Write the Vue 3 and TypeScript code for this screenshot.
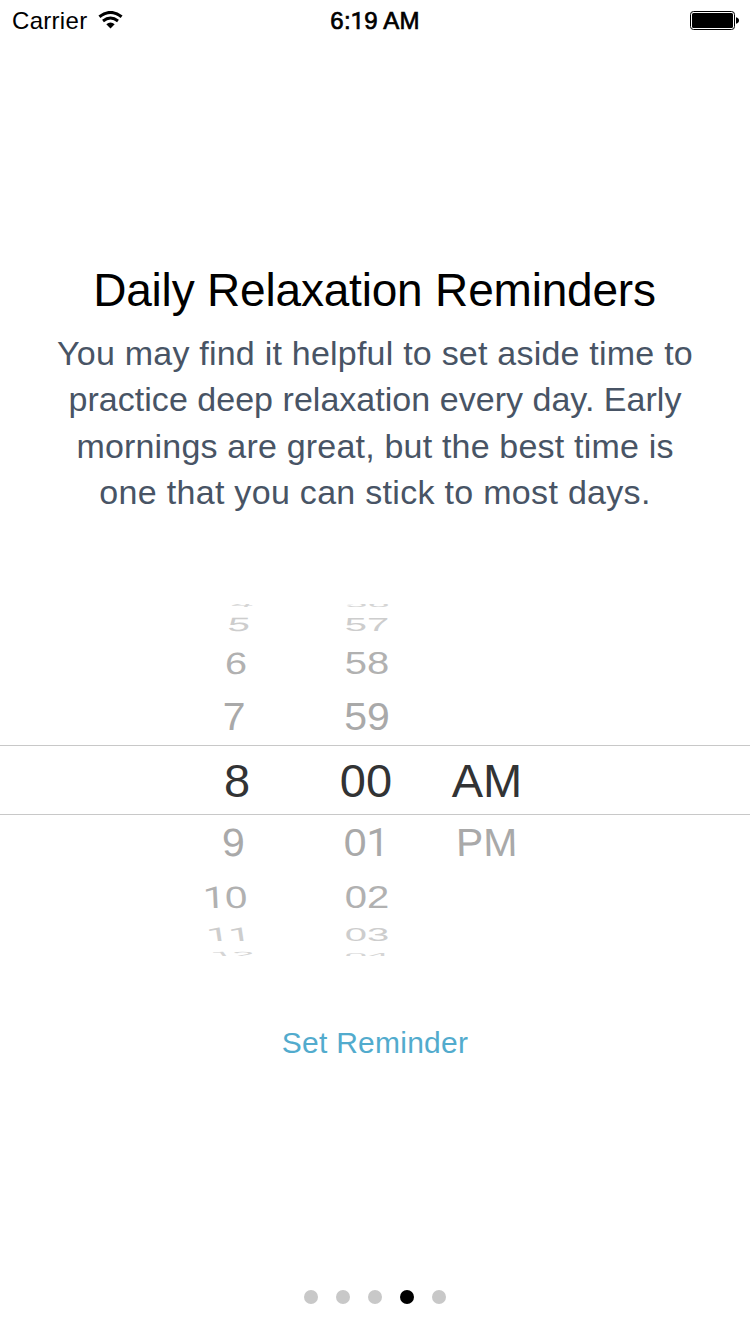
<script setup lang="ts">
interface WheelItem {
  text: string
  /** Distance in rows from the selected row. */
  step: number
  shift: number
  skew: number
}

const rowHeights = [18, 23, 54, 56, 70, 56, 51, 23, 18]
const steps = [-4, -3, -2, -1, 0, 1, 2, 3, 4]
const squash = [1, 0.96, 0.77, 0.48, 0.19]

function makeWheel(texts: string[], shifts: number[], skews: number[]): WheelItem[] {
  return steps.map((step, i) => ({
    text: texts[i],
    step,
    shift: shifts[i] ?? 0,
    skew: skews[i] ?? 0,
  }))
}

const wheels = [
  {
    name: 'hours',
    items: makeWheel(
      ['4', '5', '6', '7', '8', '9', '10', '11', '12'],
      [7, 3, 0, -2.5, 1, -3, -11, -7.5, -3],
      [-8, -4, -2, -1, 0, 1, 2, 4, 8],
    ),
  },
  {
    name: 'minutes',
    items: makeWheel(
      ['56', '57', '58', '59', '00', '01', '02', '03', '04'],
      [1.5, 1, 1, 1, 0, 0.5, 1, 1, 1],
      [],
    ),
  },
  {
    name: 'meridiem',
    items: makeWheel(['', '', '', '', 'AM', 'PM', '', '', ''], [0, 0, 0, 0, 0, 0, 0, 0, 0], [0, 0, 0, 0, 0, 1, 0, 0, 0]),
  },
]

function glyphStyle(item: WheelItem) {
  const y = squash[Math.abs(item.step)]
  return { transform: `translateX(${item.shift}px) scaleY(${y}) skewX(${item.skew}deg)` }
}

const pages = 5
const currentPage = 4
</script>

<template>
  <main class="screen">
    <header class="status">
      <div class="carrier">
        <span class="carrier-name">Carrier</span>
        <svg class="wifi" width="25" height="18" viewBox="0 0 25 18">
          <path d="M1.4 5.8Q12.5 -3 23.6 5.8" fill="none" stroke="#000" stroke-width="3" />
          <path d="M5 10Q12.5 4 20 10" fill="none" stroke="#000" stroke-width="2.9" />
          <path d="M8.3 13.3Q12.5 9.9 16.7 13.3L12.5 17.6Z" fill="#000" />
        </svg>
      </div>
      <div class="clock">6:<span class="one">1</span>9 AM</div>
      <svg class="battery" width="50" height="20" viewBox="0 0 50 20">
        <rect x="0.5" y="0.5" width="44" height="18" rx="3" fill="#fff" stroke="#000" />
        <rect x="2" y="2" width="41" height="15" rx="1.5" fill="#000" />
        <path d="M46 6.3Q49 7 49 9.5Q49 12 46 12.7Z" fill="#000" />
      </svg>
    </header>

    <section class="intro">
      <h1>Daily Relaxation Reminders</h1>
      <p>
        <span class="l1">You may find it helpful to set aside time to</span>
        <span class="l2">practice deep relaxation every day. Early</span>
        <span class="l3">mornings are great, but the best time is</span>
        <span class="l4">one that you can stick to most days.</span>
      </p>
    </section>

    <section class="picker">
      <div class="band"></div>
      <div v-for="wheel in wheels" :key="wheel.name" class="wheel" :class="wheel.name">
        <div
          v-for="(item, i) in wheel.items"
          :key="i"
          class="row"
          :class="'d' + Math.abs(item.step)"
          :style="{ height: rowHeights[i] + 'px' }"
        >
          <span class="glyphs" :style="glyphStyle(item)"><span v-for="(c, k) in item.text" :key="k" :class="{ one: c === '1' }">{{ c }}</span></span>
        </div>
      </div>
    </section>

    <button class="action" type="button">Set Reminder</button>

    <nav class="dots">
      <i v-for="n in pages" :key="n" :class="{ on: n === currentPage }"></i>
    </nav>
  </main>
</template>

<style>
body {
  margin: 0;
  background: #fff;
}
</style>

<style scoped>
.screen {
  width: 750px;
  height: 1334px;
  box-sizing: border-box;
  display: flex;
  flex-direction: column;
  background: #fff;
  color: #000;
  font-family: "Liberation Sans", Arial, sans-serif;
  overflow: hidden;
}
.one {
  font-family: Roboto, sans-serif;
  font-size: 0.98em;
}
.status {
  height: 42px;
  display: grid;
  grid-template-columns: 1fr auto 1fr;
  align-items: center;
  padding: 0 10px 0 12px;
  font-size: 24px;
  line-height: 42px;
}
.carrier {
  display: flex;
  align-items: center;
  gap: 11px;
}
.carrier-name {
  letter-spacing: 0.3px;
}
.wifi {
  margin-bottom: 2px;
}
.clock {
  letter-spacing: 0.2px;
  margin-right: 2px;
  -webkit-text-stroke: 0.7px #000;
}
.battery {
  justify-self: end;
}
.intro {
  margin-top: 221px;
  text-align: center;
}
h1 {
  margin: 0 1px 0 0;
  font-size: 46px;
  font-weight: 400;
  line-height: 54px;
  letter-spacing: -0.19px;
  white-space: nowrap;
}
p {
  margin: 13px 0 0;
  font-size: 34px;
  line-height: 46.4px;
  color: #485465;
}
p span {
  display: block;
  white-space: nowrap;
}
.l1 {
  letter-spacing: 0.22px;
}
.l2 {
  letter-spacing: 0.03px;
}
.l3 {
  letter-spacing: 0.19px;
}
.l4 {
  letter-spacing: 0.3px;
}
.picker {
  position: relative;
  height: 352px;
  margin-top: 88px;
  display: grid;
  grid-template-columns: 130px 130px 112px;
  padding-left: 171px;
  overflow: hidden;
}
.band {
  position: absolute;
  left: 0;
  right: 0;
  top: 141px;
  height: 68px;
  border: solid #c8c8c8;
  border-width: 1px 0;
}
.wheel {
  margin-top: -9px;
}
.row {
  display: flex;
  align-items: center;
  justify-content: center;
  line-height: 1;
  font-size: 40px;
}
.glyphs {
  display: block;
  white-space: nowrap;
}
.d0 {
  font-size: 47px;
  color: #323334;
}
.d1 {
  font-size: 41px;
  color: #a9a9a9;
}
.d2 {
  color: #b1b1b1;
}
.d3 {
  color: #cdcdcd;
}
.d4 {
  color: #d5d5d5;
}
.action {
  align-self: center;
  margin-top: 67px;
  padding: 0;
  border: 0;
  background: none;
  font: 30px/40px "Liberation Sans", Arial, sans-serif;
  letter-spacing: 0.25px;
  color: #52abcd;
}
.dots {
  margin-top: 227px;
  display: flex;
  justify-content: center;
  gap: 18px;
}
.dots i {
  width: 14px;
  height: 14px;
  border-radius: 50%;
  background: #c8c8c8;
}
.dots .on {
  background: #000;
}
</style>
